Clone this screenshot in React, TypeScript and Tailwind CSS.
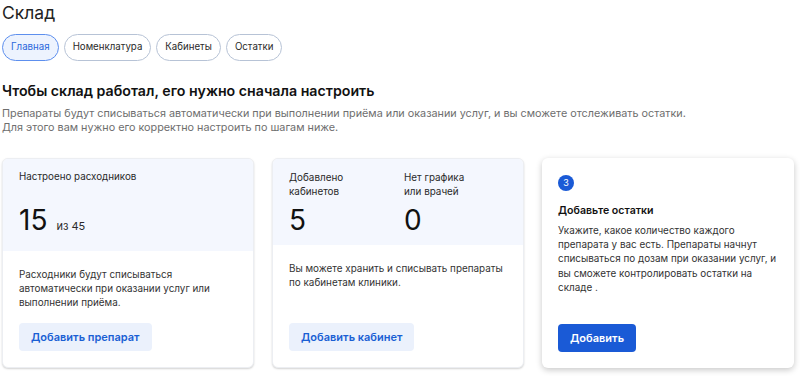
import React from "react";

const font = { fontFamily: "Inter, 'Noto Sans', sans-serif" };

function Tab({ label, active }: { label: string; active?: boolean }) {
  return (
    <div
      className={
        "h-[27px] px-[8px] flex items-center rounded-full border text-[9.7px] " +
        (active
          ? "bg-[#edf3fe] border-[#5d8fee] text-[#2b68dc]"
          : "bg-white border-[#b7c3d6] text-[#2a2a2a]")
      }
    >
      {label}
    </div>
  );
}

export default function App() {
  return (
    <div className="w-[800px] h-[376px] bg-white overflow-hidden pl-[2px] pr-[6px]" style={font}>
      <div className="text-[17.5px] leading-[24px] text-[#222] pt-[1px]">Склад</div>
      <div className="flex gap-[5px] mt-[9px]">
        <Tab label="Главная" active />
        <Tab label="Номенклатура" />
        <Tab label="Кабинеты" />
        <Tab label="Остатки" />
      </div>
      <div className="mt-[20px] text-[14.2px] leading-[20px] font-semibold text-[#111]">
        Чтобы склад работал, его нужно сначала настроить
      </div>
      <div className="mt-[6px] text-[10.8px] leading-[14px] text-[#6e6e6e]">
        Препараты будут списываться автоматически при выполнении приёма или оказании услуг, и вы сможете отслеживать остатки.
        <br />
        Для этого вам нужно его корректно настроить по шагам ниже.
      </div>
      <div className="grid grid-cols-3 gap-[18px] mt-[23px] h-[210px]">
        <div className="flex flex-col rounded-[6px] border border-[#eceef2] shadow-[0_1px_2px_rgba(0,0,0,0.18)] overflow-hidden bg-white">
          <div className="h-[92px] bg-[#f4f7fe] px-4 pt-[11px]">
            <div className="text-[9.8px] leading-[14px] text-[#2a2a2a]">Настроено расходников</div>
            <div className="flex items-baseline gap-[9px] mt-[19px]">
              <span className="text-[28px] leading-[34px] text-[#111]">15</span>
              <span className="text-[11px] text-[#2a2a2a]">из 45</span>
            </div>
          </div>
          <div className="flex-1 flex flex-col px-4 pt-4 pb-4">
            <div className="text-[9.9px] leading-[14px] text-[#333]">
              Расходники будут списываться
              <br />
              автоматически при оказании услуг или
              <br />
              выполнении приёма.
            </div>
            <div className="mt-auto self-start h-[28px] px-3 rounded-[4px] bg-[#ebf1fc] text-[#1a5fd4] text-[11px] font-semibold flex items-center">
              Добавить препарат
            </div>
          </div>
        </div>

        <div className="flex flex-col rounded-[6px] border border-[#eceef2] shadow-[0_1px_2px_rgba(0,0,0,0.18)] overflow-hidden bg-white">
          <div className="h-[86px] bg-[#f4f7fe] px-4 pt-[11px] flex">
            <div className="w-[115px]">
              <div className="text-[9.9px] leading-[14px] text-[#2a2a2a]">
                Добавлено
                <br />
                кабинетов
              </div>
              <div className="text-[28px] leading-[34px] text-[#111] mt-[5px]">5</div>
            </div>
            <div>
              <div className="text-[9.9px] leading-[14px] text-[#2a2a2a]">
                Нет графика
                <br />
                или врачей
              </div>
              <div className="text-[28px] leading-[34px] text-[#111] mt-[5px]">0</div>
            </div>
          </div>
          <div className="flex-1 flex flex-col px-4 pt-4 pb-4">
            <div className="text-[9.9px] leading-[14px] text-[#333]">
              Вы можете хранить и списывать препараты
              <br />
              по кабинетам клиники.
            </div>
            <div className="mt-auto self-start h-[28px] px-3 rounded-[4px] bg-[#ebf1fc] text-[#1a5fd4] text-[11px] font-semibold flex items-center">
              Добавить кабинет
            </div>
          </div>
        </div>

        <div className="flex flex-col rounded-[6px] shadow-[0_2px_6px_rgba(0,0,0,0.22)] bg-white px-4 pt-[17px] pb-4">
          <div className="w-4 h-4 rounded-full bg-[#1a5ad6] text-white text-[9px] flex items-center justify-center">
            3
          </div>
          <div className="mt-[13px] text-[10.6px] leading-[14px] font-semibold text-[#111]">Добавьте остатки</div>
          <div className="mt-[5px] text-[9.9px] leading-[14.2px] text-[#333]">
            Укажите, какое количество каждого
            <br />
            препарата у вас есть. Препараты начнут
            <br />
            списываться по дозам при оказании услуг, и
            <br />
            вы сможете контролировать остатки на
            <br />
            складе .
          </div>
          <div className="mt-auto self-start h-[28px] px-3 rounded-[4px] bg-[#1a5ad6] text-white text-[11px] font-semibold flex items-center">
            Добавить
          </div>
        </div>
      </div>
    </div>
  );
}
